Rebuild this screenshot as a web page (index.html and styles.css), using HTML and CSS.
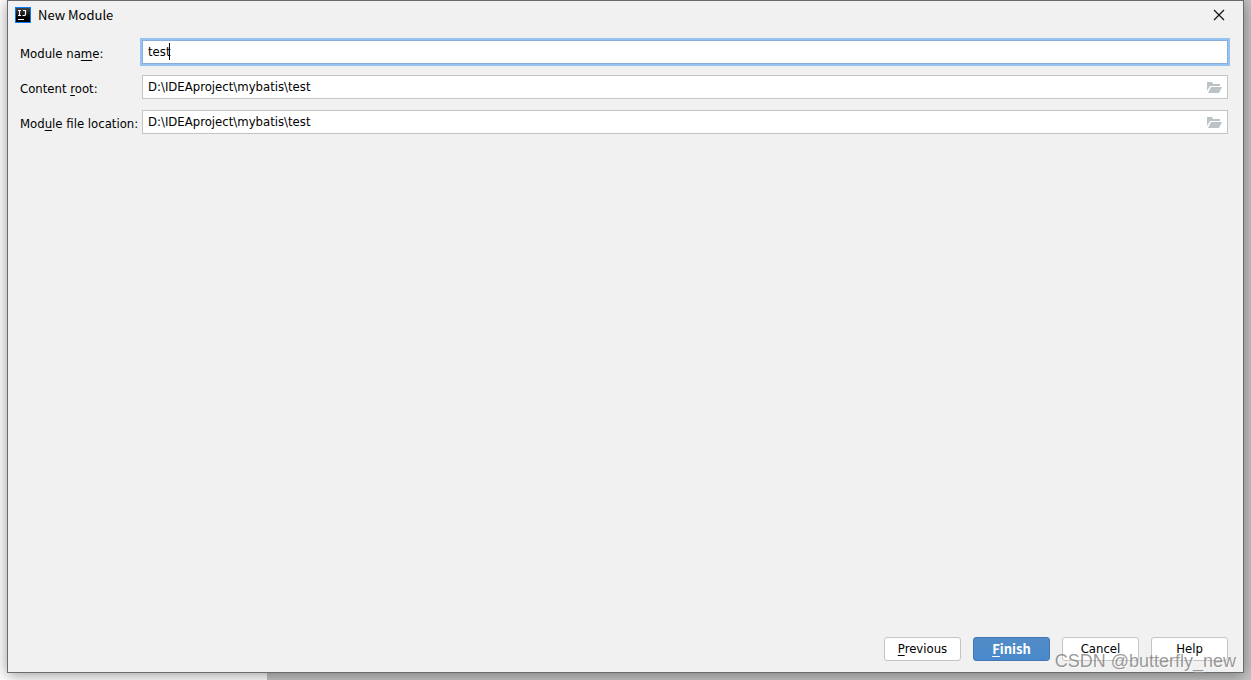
FILE: index.html
```
<!DOCTYPE html>
<html lang="en">
<head>
<meta charset="utf-8">
<title>New Module</title>
<link rel="stylesheet" href="styles.css">
</head>
<body>
<main class="dialog">
  <header class="titlebar">
    <svg class="logo" viewBox="0 0 16 16" aria-hidden="true">
      <defs><linearGradient id="logo-fill" x1="0" y1="0" x2="0" y2="1"><stop offset="0" stop-color="#444"/><stop offset="0.7" stop-color="#000"/></linearGradient></defs>
      <rect width="16" height="16" fill="#087cfa"/>
      <rect x="1" y="1" width="14" height="14" fill="url(#logo-fill)"/>
      <path d="M3 3.500h3M4.500 3.500v5M3 8.500h3M8 3.500h3M10.500 3v4.200q0 1.300-1.300 1.300H7.500" fill="none" stroke="#fff" stroke-width="1.200"/>
      <path d="M3 12.500h6" stroke="#fff"/>
    </svg>
    <h1 class="title">New Module</h1>
    <button class="close" type="button" aria-label="Close">
      <svg viewBox="0 0 12 12" width="12" height="12"><path d="M1 1l10 10M11 1L1 11" stroke="#111" stroke-width="1.200" fill="none"/></svg>
    </button>
  </header>
  <form class="form">
    <div class="row">
      <label class="label" for="name">Module na<u>m</u>e:</label>
      <div class="field focused">
        <input class="input" id="name" type="text" value="test">
        <span class="caret"></span>
      </div>
    </div>
    <div class="row">
      <label class="label" for="root">Content <u>r</u>oot:</label>
      <div class="field">
        <input class="input" id="root" type="text" value="D:\IDEAproject\mybatis\test">
        <button class="browse" type="button" aria-label="Browse content root">
          <svg viewBox="0 0 15 11" width="15" height="11"><path d="M0 0h5l1 2h7v2H3L0 9zM4 5h11l-3 6H1z" fill="#bcc3c7"/></svg>
        </button>
      </div>
    </div>
    <div class="row">
      <label class="label" for="location">Mod<u>u</u>le file location:</label>
      <div class="field">
        <input class="input" id="location" type="text" value="D:\IDEAproject\mybatis\test">
        <button class="browse" type="button" aria-label="Browse module file location">
          <svg viewBox="0 0 15 11" width="15" height="11"><path d="M0 0h5l1 2h7v2H3L0 9zM4 5h11l-3 6H1z" fill="#bcc3c7"/></svg>
        </button>
      </div>
    </div>
  </form>
  <footer class="actions">
    <button class="button" type="button"><u>P</u>revious</button>
    <button class="button primary" type="button"><u>F</u>inish</button>
    <button class="button" type="button">Cancel</button>
    <button class="button" type="button">Help</button>
  </footer>
</main>
<div class="watermark">CSDN @butterfly_new</div>
</body>
</html>
```
FILE: styles.css
```
* { box-sizing: border-box; }

body {
  margin: 0;
  height: 100vh;
  padding: 0 7px 7px;
  display: flex;
  overflow: hidden;
  position: relative;
  background: linear-gradient(to right, #fff 267px, #c4c4c4 267px);
  color: #000;
  font: 13px/20px "DejaVu Sans Condensed", "Noto Sans", sans-serif;
}

.dialog {
  flex: 1;
  display: flex;
  flex-direction: column;
  background: #f1f1f1;
  border: 1px solid #6b6b6b;
  box-shadow: 0 2px 14px rgba(0, 0, 0, 0.4);
}

.titlebar {
  display: flex;
  align-items: center;
  height: 28px;
  padding: 0 18px 0 7px;
}

.logo { width: 16px; height: 16px; }

.title {
  flex: 1;
  margin: 0 0 0 7px;
  font: 400 13px/20px "Noto Sans CJK SC", sans-serif;
}

.close, .browse {
  display: flex;
  padding: 0;
  border: 0;
  background: none;
}

.form {
  flex: 1;
  display: flex;
  flex-direction: column;
  gap: 11px;
  padding: 11px 15px 0 12px;
}

.row { display: flex; }

.label {
  width: 122px;
  padding-top: 4px;
  white-space: nowrap;
}

u { text-underline-offset: 2px; text-decoration-skip-ink: none; }

.field {
  flex: 1;
  display: flex;
  align-items: center;
  height: 24px;
  padding-right: 5px;
  position: relative;
  background: #fff;
  border: 1px solid #c4c4c4;
}

.field.focused {
  border-color: #87afda;
  box-shadow: 0 0 0 2px #97c3f3;
}

.input {
  flex: 1;
  min-width: 0;
  height: 22px;
  padding: 0 5px 1px;
  border: 0;
  outline: 0;
  background: none;
  color: #000;
  font: inherit;
}

.browse { padding-top: 1px; }

.caret {
  position: absolute;
  left: 26px;
  top: 2px;
  width: 1px;
  height: 17px;
  background: #000;
}

.actions {
  display: flex;
  justify-content: flex-end;
  gap: 12px;
  padding: 0 15px 11px;
}

.button {
  width: 77px;
  height: 24px;
  padding: 0;
  border: 1px solid #c4c4c4;
  border-radius: 3px;
  background: #fff;
  color: #000;
  font: inherit;
}

.button.primary {
  border-color: #4378b5;
  background: linear-gradient(#528cc7, #4989cc);
  color: #fff;
  font-family: "Noto Sans CJK SC", sans-serif;
  font-weight: 700;
}

.watermark {
  position: absolute;
  right: 15px;
  bottom: 8px;
  color: rgba(110, 110, 110, 0.7);
  font: 18px/22px "Liberation Sans", Arial, sans-serif;
  text-shadow: 1px 1px 0 rgba(255, 255, 255, 0.6);
  pointer-events: none;
}
```
